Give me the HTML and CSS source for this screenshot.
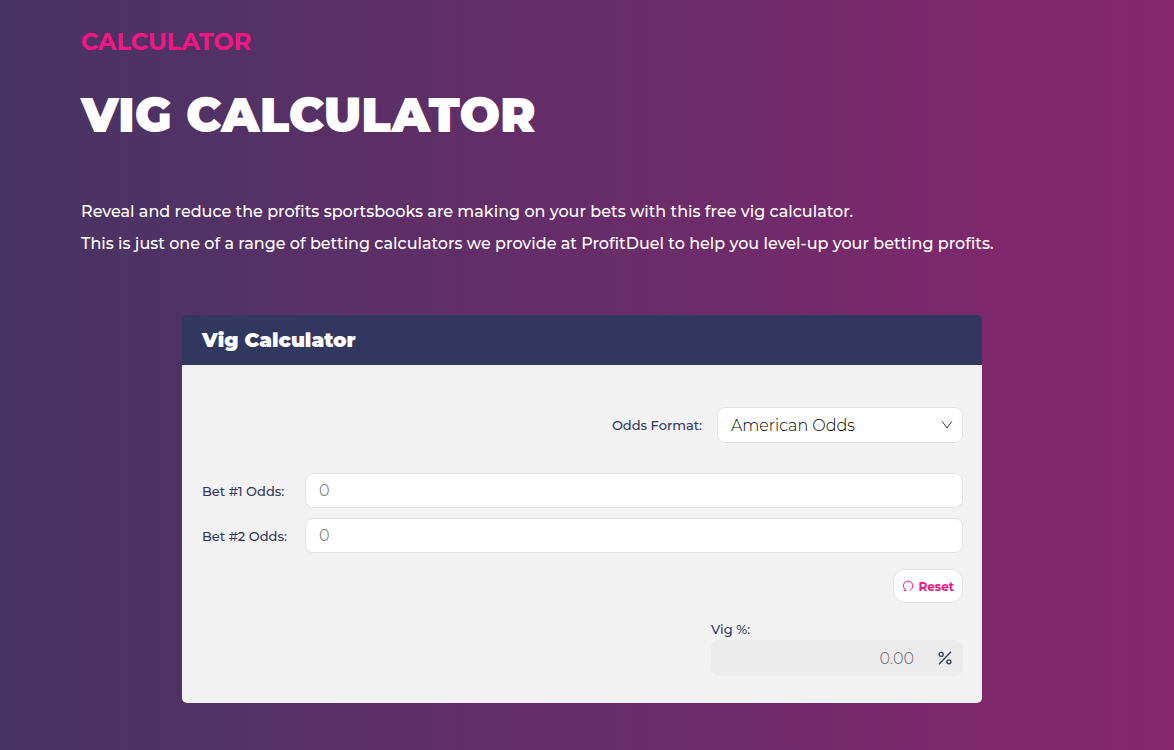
FILE: index.html
```html
<!DOCTYPE html>
<html lang="en">
<head>
    <meta charset="UTF-8">
    <meta name="viewport" content="width=device-width, initial-scale=1.0">
    <title>Vig Calculator</title>
    <link rel="stylesheet" href="styles.css">
</head>
<body>
    <main class="page">
        <p class="category">CALCULATOR</p>
        <h1 class="page-title">VIG CALCULATOR</h1>
        <div class="intro">
            <p>Reveal and reduce the profits sportsbooks are making on your bets with this free vig calculator.</p>
            <p>This is just one of a range of betting calculators we provide at ProfitDuel to help you level-up your betting profits.</p>
        </div>

        <form class="calculator">
            <h2 class="calculator-title">Vig Calculator</h2>
            <div class="calculator-body">
                <div class="format-row">
                    <label for="oddsFormat">Odds Format:</label>
                    <div class="select-wrap">
                        <select id="oddsFormat" name="oddsFormat">
                            <option>American Odds</option>
                            <option>Decimal Odds</option>
                            <option>Fractional Odds</option>
                        </select>
                        <svg class="arrow" viewBox="0 0 12 12" aria-hidden="true"><path d="M1.2 2.4 6 9l4.8-6.6"/></svg>
                    </div>
                </div>

                <div class="bet-row">
                    <label for="bet1">Bet #1 Odds:</label>
                    <input type="text" id="bet1" name="bet1" placeholder="0">
                </div>
                <div class="bet-row">
                    <label for="bet2">Bet #2 Odds:</label>
                    <input type="text" id="bet2" name="bet2" placeholder="0">
                </div>

                <button type="reset" class="reset">
                    <svg viewBox="0 0 12 12" aria-hidden="true"><path d="M1.6 10.5H3.9V9.9A4.7 4.7 0 1 1 8.8 9.6L8 10.6"/></svg>
                    Reset
                </button>

                <div class="result">
                    <label for="vig">Vig %:</label>
                    <div class="result-box">
                        <input type="text" id="vig" name="vig" placeholder="0.00" disabled>
                        <svg viewBox="0 0 14 14" aria-hidden="true"><path d="M13 .8 1 13.2"/><circle cx="3.2" cy="3.4" r="2"/><circle cx="10.9" cy="10.8" r="2"/></svg>
                    </div>
                </div>
            </div>
        </form>
    </main>
</body>
</html>
```

FILE: styles.css
```css
* {
    box-sizing: border-box;
}
body {
    margin: 0;
    min-height: 100vh;
    font-family: Montserrat, Inter, "Open Sans", sans-serif;
    background: linear-gradient(90deg, #473463, #87266d);
    color: #fff;
}
.page {
    padding: 26px 91px 47px 81px;
}
.category {
    margin: 0;
    font-size: 24px;
    line-height: 32px;
    font-weight: 700;
    color: #f51684;
}
.page-title {
    margin: 27px 0 51px;
    font-size: 48px;
    line-height: 60px;
    font-weight: 900;
}
.intro p {
    margin: 0;
    font-size: 16px;
    line-height: 32px;
    font-weight: 500;
}
.calculator {
    max-width: 800px;
    margin: 55px auto 0;
    color: #32375f;
}
.calculator-title {
    margin: 0;
    padding: 0 20px;
    border-radius: 5px 5px 0 0;
    font-size: 20px;
    line-height: 50px;
    font-weight: 900;
    background-color: #32375f;
    color: #fff;
}
.calculator-body {
    display: flex;
    flex-direction: column;
    padding: 42px 19px 27px 20px;
    border-radius: 0 0 5px 5px;
    background-color: #f2f2f2;
}
label {
    font-size: 13px;
    line-height: 20px;
    font-weight: 500;
}
input,
select {
    width: 100%;
    height: 36px;
    padding: 0 13px;
    border: 1px solid #e3e3e3;
    border-radius: 8px;
    background-color: #fff;
    color: #000;
    font-family: inherit;
    font-size: 16px;
    font-weight: 300;
}
input::placeholder {
    color: #666;
    opacity: 1;
}
.format-row {
    display: flex;
    justify-content: flex-end;
    align-items: center;
    gap: 15px;
    margin-bottom: 30px;
}
.select-wrap {
    position: relative;
    width: 246px;
}
select {
    display: block;
    appearance: none;
}
.arrow {
    position: absolute;
    right: 10px;
    top: 12px;
    width: 12px;
    height: 12px;
    pointer-events: none;
}
svg {
    fill: none;
    stroke: #32375f;
}
.bet-row {
    display: grid;
    grid-template-columns: 103px 1fr;
    align-items: center;
    margin-bottom: 10px;
}
.bet-row input {
    height: 35px;
}
.reset {
    display: flex;
    align-items: center;
    align-self: flex-end;
    gap: 4px;
    height: 34px;
    margin-top: 6px;
    padding: 0 8px;
    border: 1px solid #e3e3e3;
    border-radius: 12px;
    background-color: #fff;
    color: #ed1683;
    font-family: inherit;
    font-size: 12px;
    font-weight: 700;
}
.reset svg {
    width: 12px;
    height: 12px;
    stroke: #ed1683;
}
.result {
    display: flex;
    flex-direction: column;
    align-self: flex-end;
    width: 252px;
    margin-top: 16px;
}
.result-box {
    display: flex;
    align-items: center;
    margin-top: 1px;
    padding-right: 11px;
    border-radius: 8px;
    background-color: #ebebeb;
}
.result-box input {
    flex: 1;
    min-width: 0;
    padding-right: 24px;
    border: 0;
    background: none;
    text-align: right;
}
.result-box svg {
    width: 14px;
    height: 14px;
    stroke-width: 1.3;
}
```
